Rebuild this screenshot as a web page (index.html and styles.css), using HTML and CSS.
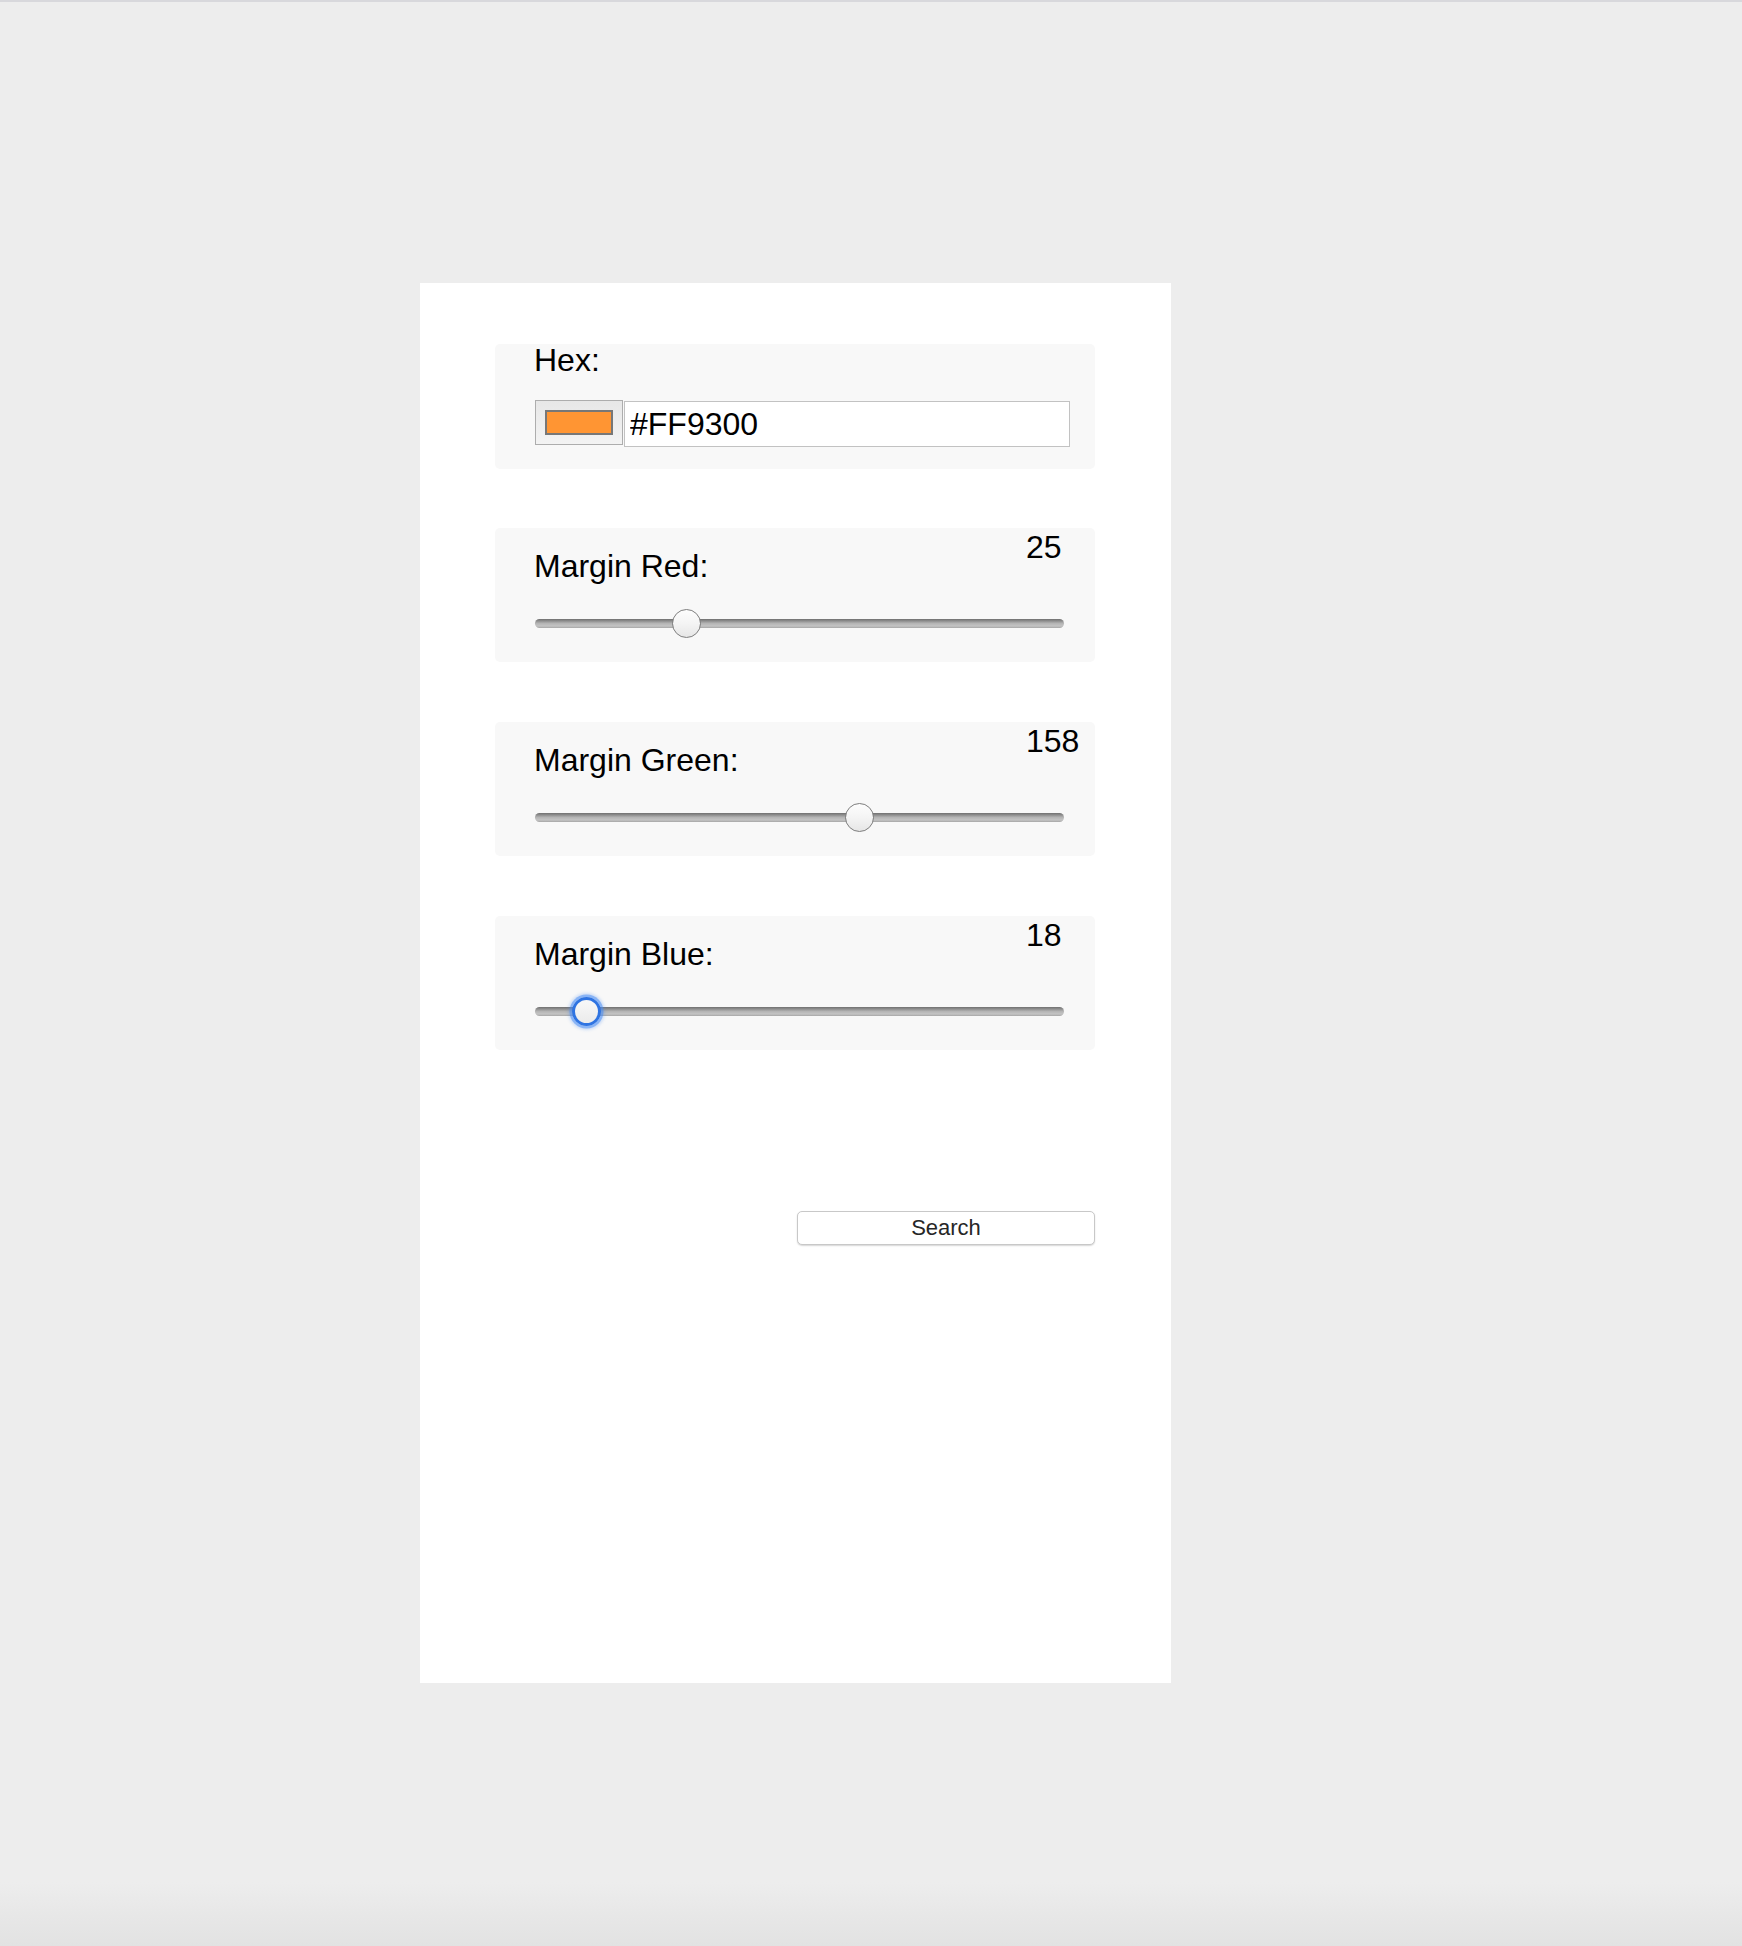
FILE: index.html
```
<!DOCTYPE html>
<html lang="en">
<head>
<meta charset="utf-8">
<title>Colour margins</title>
<link rel="stylesheet" href="styles.css">
</head>
<body>
<div class="panel">
  <div class="card hex-card">
    <label class="label" for="hex">Hex:</label>
    <div class="hex-row">
      <span class="swatch"><span class="swatch-fill"></span></span>
      <input class="hex-input" id="hex" type="text" value="#FF9300">
    </div>
  </div>

  <div class="card slider-card">
    <span class="value">25</span>
    <label class="label" for="red">Margin Red:</label>
    <input class="slider" id="red" type="range" min="0" max="255" value="70">
  </div>

  <div class="card slider-card">
    <span class="value">158</span>
    <label class="label" for="green">Margin Green:</label>
    <input class="slider" id="green" type="range" min="0" max="255" value="158">
  </div>

  <div class="card slider-card">
    <span class="value">18</span>
    <label class="label" for="blue">Margin Blue:</label>
    <input class="slider focused" id="blue" type="range" min="0" max="255" value="19">
  </div>

  <button class="search" type="button">Search</button>
</div>
</body>
</html>
```
FILE: styles.css
```
html, body {
  margin: 0;
  padding: 0;
}

body {
  min-height: 1944px;
  border-top: 2px solid #d8d8dc;
  background: linear-gradient(to bottom, #ededed 0, #ededed calc(100% - 64px), #e2e2e2 100%);
  font-family: "Liberation Sans", Arial, sans-serif;
  color: #000;
}

.panel {
  box-sizing: border-box;
  width: 751px;
  height: 1400px;
  margin: 281px 0 0 420px;
  padding: 61px 76px 0 75px;
  background: #fff;
}

.card {
  position: relative;
  box-sizing: border-box;
  background: #f8f8f8;
  border-radius: 5px;
  padding-left: 39px;
}

.label {
  display: block;
  font-size: 32px;
  line-height: 37px;
}

.hex-card {
  height: 125px;
  padding-bottom: 23px;
}

.hex-card .label {
  line-height: 33px;
}

.hex-row {
  display: flex;
  align-items: flex-start;
  margin-top: 23px;
}

.swatch {
  box-sizing: border-box;
  display: flex;
  align-items: center;
  justify-content: center;
  width: 88px;
  height: 45px;
  margin-left: 1px;
  border: 1.5px solid #adadad;
  background: linear-gradient(to bottom, #e7e7e7, #f3f3f3);
}

.swatch-fill {
  box-sizing: border-box;
  width: 68px;
  height: 25px;
  border: 2px solid #777;
  background: #ff9533;
}

.hex-input {
  box-sizing: border-box;
  width: 446px;
  height: 46px;
  margin: 1px 0 0 1px;
  padding: 0 5px;
  border: 1.5px solid #c2c2c2;
  background: #fff;
  font-family: "Liberation Sans", Arial, sans-serif;
  font-size: 32px;
  color: #000;
  outline: none;
}

.slider-card {
  height: 134px;
  margin-top: 59px;
}

.slider-card + .slider-card {
  margin-top: 60px;
}

.slider-card .label {
  padding-top: 20px;
}

.value {
  position: absolute;
  top: 1px;
  left: 531px;
  font-size: 32px;
  line-height: 37px;
}

.slider {
  -webkit-appearance: none;
  appearance: none;
  display: block;
  width: 529px;
  height: 29px;
  margin: 24px 0 0 1px;
  padding: 0;
  background: transparent;
  outline: none;
}

.slider::-webkit-slider-runnable-track {
  height: 9px;
  border-radius: 5px;
  background: linear-gradient(to bottom, #707070 0, #8e8e8e 22%, #b4b4b4 48%, #c4c4c4 78%, #a6a6a6 100%);
}

.slider::-webkit-slider-thumb {
  -webkit-appearance: none;
  appearance: none;
  box-sizing: border-box;
  width: 29px;
  height: 29px;
  margin-top: -10px;
  border-radius: 50%;
  border: 1.5px solid #7e7e7e;
  background: linear-gradient(to bottom, #fdfdfd 0, #f4f4f4 50%, #e6e6e6 100%);
}

.slider.focused::-webkit-slider-thumb {
  border: 3.5px solid #2f74e2;
  background: linear-gradient(to bottom, #f8f8f8, #ebebeb);
  box-shadow: 0 0 0 2.5px rgba(70, 140, 245, 0.5), 0 0 3px 4px rgba(70, 140, 245, 0.25);
}

.search {
  display: block;
  box-sizing: border-box;
  width: 298px;
  height: 34px;
  margin: 161px 0 0 auto;
  padding: 0;
  border: 1px solid #c8c8c8;
  border-radius: 5px;
  background: #fff;
  box-shadow: 0 1px 1.5px rgba(0, 0, 0, 0.16);
  font-family: "Liberation Sans", Arial, sans-serif;
  font-size: 22px;
  color: #262626;
}
```
